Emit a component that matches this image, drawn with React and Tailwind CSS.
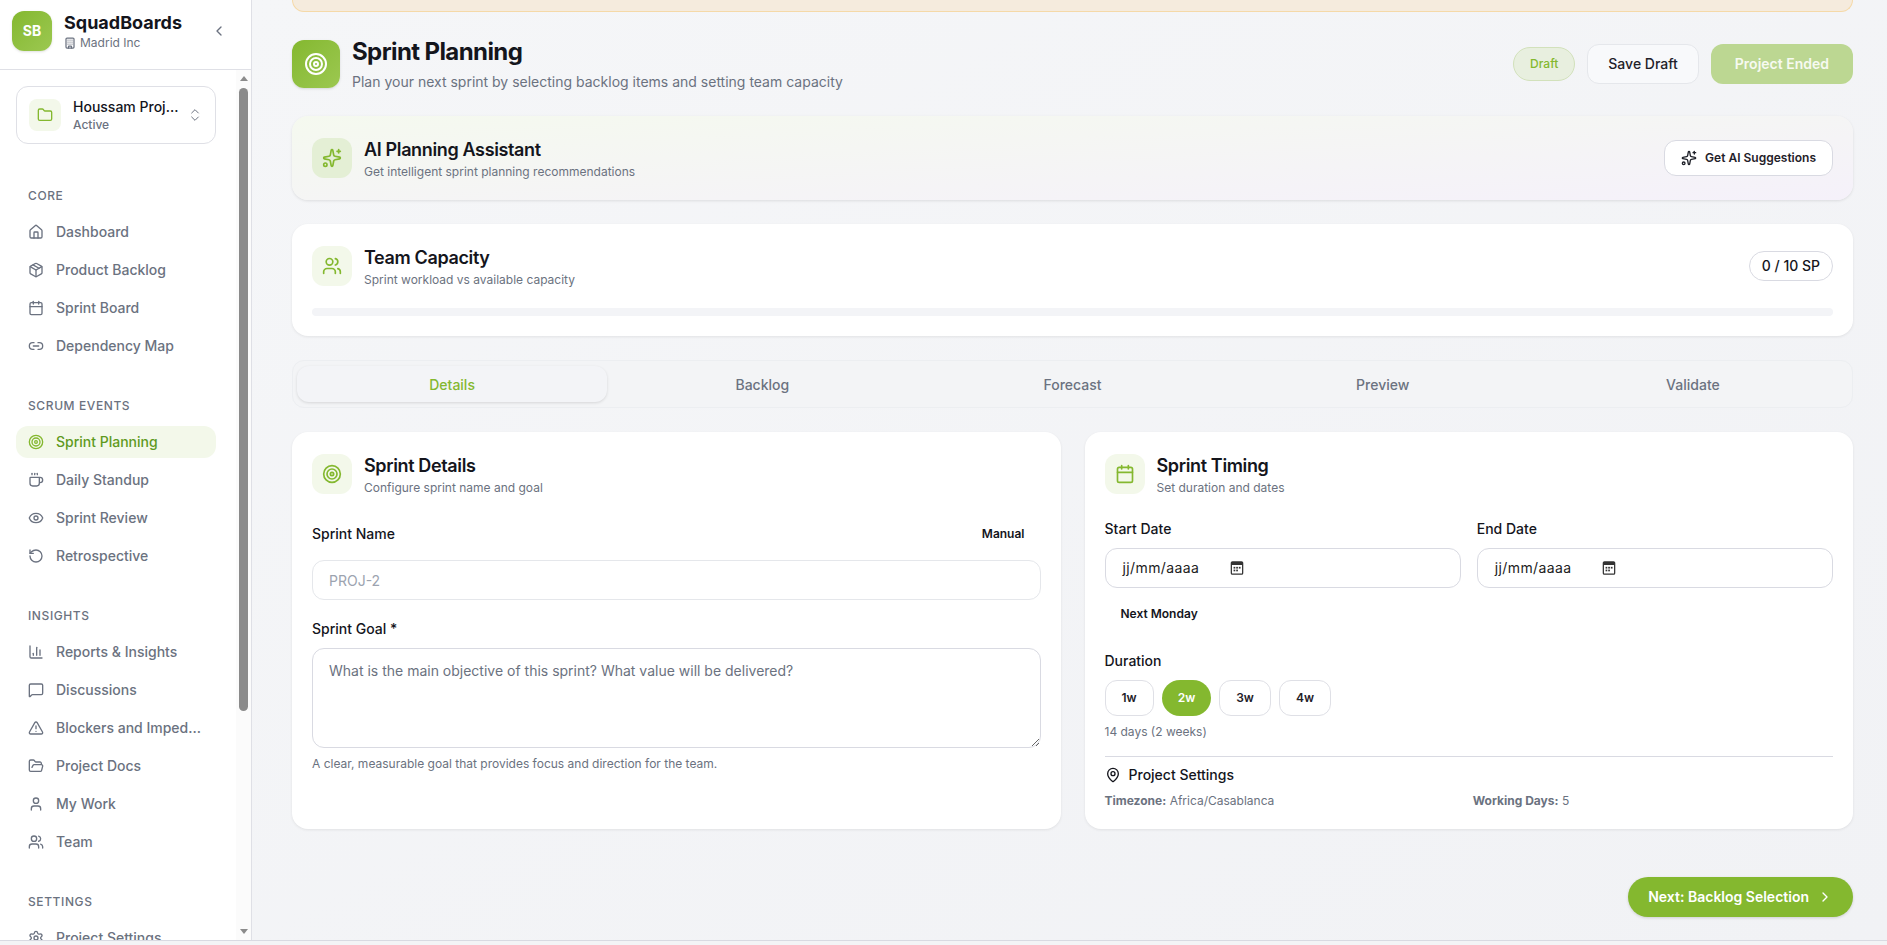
import React from "react";
import {
  ChevronLeft, ChevronRight, ChevronsUpDown, Building, Folder, House, Package, Calendar, Link2, Target, Coffee, Eye,
  RotateCcw, ChartColumn, MessageSquare, TriangleAlert, FolderOpen, User, Users, Settings, Sparkles, MapPin,
} from "lucide-react";

function NavItem({ icon: Icon, label, active }) {
  return (
    <div className={`flex h-8 shrink-0 items-center gap-3 rounded-xl px-3 text-sm font-medium ${active ? "bg-[#f3f8ea] text-[#5f9a1e]" : "text-[#6b7280]"}`}>
      <Icon className={`h-4 w-4 shrink-0 ${active ? "text-[#84b82f]" : ""}`} strokeWidth={2} />
      <span className="truncate">{label}</span>
    </div>
  );
}

function Section({ title, items }) {
  return (
    <div className="mb-9">
      <div className="mb-3 px-3 text-xs font-medium leading-4 tracking-wider text-[#6b7280]">{title}</div>
      <div className="flex flex-col gap-1.5">
        {items.map((i) => (
          <NavItem key={i.label} {...i} />
        ))}
      </div>
    </div>
  );
}

function Sidebar() {
  return (
    <aside className="flex h-full w-[252px] shrink-0 flex-col border-r border-[#dfe0e6] bg-white">
      <div className="flex h-[70px] shrink-0 items-center border-b border-[#dfe0e6] pl-3 pr-6 pb-[8px]">
        <div className="flex h-10 w-10 items-center justify-center rounded-xl bg-gradient-to-br from-[#84b82f] to-[#9cc850] text-sm font-bold text-white shadow-sm">SB</div>
        <div className="ml-3 flex-1">
          <div className="text-lg font-bold leading-6 text-[#14151c]">SquadBoards</div>
          <div className="flex items-center gap-1 text-xs leading-4 text-[#6b7280]">
            <Building className="h-3 w-3" strokeWidth={2.5} />
            Madrid Inc
          </div>
        </div>
        <ChevronLeft className="h-4 w-4 text-[#6b7280]" strokeWidth={2} />
      </div>
      <div className="flex min-h-0 flex-1">
        <div className="min-w-0 flex-1 overflow-hidden pl-4 pr-5 pt-4">
          <div className="mb-11 flex h-[58px] items-center rounded-xl border border-[#dfe0e6] pl-3 pr-[12px]">
            <div className="flex h-8 w-8 shrink-0 items-center justify-center rounded-lg bg-[#f3f8ea]">
              <Folder className="h-4 w-4 text-[#84b82f]" strokeWidth={2} />
            </div>
            <div className="ml-3 min-w-0 flex-1">
              <div className="truncate text-sm font-medium leading-5 text-[#14151c]">Houssam Project</div>
              <div className="text-xs font-medium leading-4 text-[#6b7280]">Active</div>
            </div>
            <ChevronsUpDown className="ml-2 h-4 w-4 shrink-0 text-[#6b7280]" strokeWidth={1.5} />
          </div>
          <Section title="CORE" items={[
            { icon: House, label: "Dashboard" },
            { icon: Package, label: "Product Backlog" },
            { icon: Calendar, label: "Sprint Board" },
            { icon: Link2, label: "Dependency Map" },
          ]} />
          <Section title="SCRUM EVENTS" items={[
            { icon: Target, label: "Sprint Planning", active: true },
            { icon: Coffee, label: "Daily Standup" },
            { icon: Eye, label: "Sprint Review" },
            { icon: RotateCcw, label: "Retrospective" },
          ]} />
          <Section title="INSIGHTS" items={[
            { icon: ChartColumn, label: "Reports & Insights" },
            { icon: MessageSquare, label: "Discussions" },
            { icon: TriangleAlert, label: "Blockers and Impediments" },
            { icon: FolderOpen, label: "Project Docs" },
            { icon: User, label: "My Work" },
            { icon: Users, label: "Team" },
          ]} />
          <Section title="SETTINGS" items={[{ icon: Settings, label: "Project Settings" }]} />
        </div>
        <div className="flex w-[15px] shrink-0 flex-col items-center bg-[#fbfbfb]">
          <div className="mt-[6px] h-0 w-0 border-x-[4px] border-b-[5px] border-x-transparent border-b-[#8b8b8b]" />
          <div className="mt-[7px] h-[623px] w-[9px] rounded-full bg-[#8b8b8b]" />
          <div className="mt-auto mb-[6px] h-0 w-0 border-x-[4px] border-t-[5px] border-x-transparent border-t-[#8b8b8b]" />
        </div>
      </div>
    </aside>
  );
}

function IconBox({ icon: Icon, tint }) {
  return (
    <div className={`flex h-10 w-10 shrink-0 items-center justify-center rounded-xl ${tint ? "bg-[#e4efd5]" : "bg-[#f3f8ea]"}`}>
      <Icon className="h-5 w-5 text-[#84b82f]" strokeWidth={2} />
    </div>
  );
}

function CardHead({ icon, title, sub, tint, children }) {
  return (
    <div className="flex h-11 items-center gap-3">
      <IconBox icon={icon} tint={tint} />
      <div className="flex-1">
        <div className="text-lg font-semibold leading-7 tracking-[-0.02em] text-[#14151c]">{title}</div>
        <div className="text-xs leading-4 text-[#6b7280]">{sub}</div>
      </div>
      {children}
    </div>
  );
}

function PickerGlyph() {
  return (
    <svg viewBox="0 0 12 14" className="h-[16px] w-[14px] text-[#333]" fill="currentColor">
      <path d="M2 1h8a1.5 1.5 0 0 1 1.5 1.5v9A1.5 1.5 0 0 1 10 13H2a1.5 1.5 0 0 1-1.5-1.5v-9A1.5 1.5 0 0 1 2 1zm-.4 3.4v7.1c0 .3.1.4.4.4h8c.3 0 .4-.1.4-.4V4.4H1.6z" />
      <rect x="3" y="6" width="1.5" height="1.5" /><rect x="5.3" y="6" width="1.5" height="1.5" /><rect x="7.6" y="6" width="1.5" height="1.5" />
      <rect x="3" y="8.4" width="1.5" height="1.5" /><rect x="5.3" y="8.4" width="1.5" height="1.5" />
    </svg>
  );
}

function DateField({ label }) {
  return (
    <div>
      <div className="mb-[9px] text-sm font-medium leading-5 text-[#14151c]">{label}</div>
      <div className="flex h-10 items-center rounded-xl border border-[#d9dae2] bg-white pl-[17px] text-sm text-[#222]">
        <span className="w-[107px] tracking-[0.4px]">jj/mm/aaaa</span>
        <PickerGlyph />
      </div>
    </div>
  );
}

function Tab({ label, active }) {
  return (
    <div className={`flex h-9 flex-1 items-center justify-center rounded-xl pt-px text-sm font-medium ${active ? "bg-[#f3f4f7] text-[#84b82f] shadow-[0_1px_3px_rgba(0,0,0,0.12)]" : "text-[#6b7280]"}`}>
      {label}
    </div>
  );
}

function Main() {
  return (
    <main className="min-w-0 flex-1 overflow-hidden bg-gradient-to-br from-[#f5f6f8] to-[#f1f2f5] pl-10 pr-[34px]">
      <div className="mb-6 h-3 rounded-b-xl border-x border-b border-[#f5d9a8] bg-[#f5ebdd]" />

      <div className="mb-6 flex h-14 items-center gap-3">
        <div className="flex h-12 w-12 items-center justify-center rounded-xl bg-gradient-to-br from-[#84b82f] to-[#9cc850] shadow-sm">
          <Target className="h-6 w-6 text-white" strokeWidth={2} />
        </div>
        <div className="flex-1">
          <h1 className="text-2xl font-bold leading-8 tracking-tight text-[#14151c]">Sprint Planning</h1>
          <p className="mt-1 text-sm leading-5 text-[#6b7280]">Plan your next sprint by selecting backlog items and setting team capacity</p>
        </div>
        <div className="flex h-[34px] items-center rounded-full border border-[#d2e1bb] bg-[#e8efdf] px-4 text-xs font-medium text-[#84b82f]">Draft</div>
        <div className="flex h-10 items-center rounded-xl border border-[#e5e7eb] bg-[#f8f9fb] px-5 text-sm font-medium text-[#1f2129]">Save Draft</div>
        <div className="flex h-10 items-center rounded-xl bg-[#bcd792] px-6 text-sm font-semibold text-[#f7faf1]">Project Ended</div>
      </div>

      <div className="mb-6 rounded-2xl bg-gradient-to-br from-[#f5f9ef] to-[#f5f1fa] p-5 shadow-[0_1px_3px_rgba(0,0,0,0.1)]">
        <CardHead icon={Sparkles} tint title="AI Planning Assistant" sub="Get intelligent sprint planning recommendations">
          <div className="flex h-9 items-center gap-2 rounded-xl border border-[#d9dae2] bg-white px-4 text-xs font-semibold text-[#1f2129]">
            <Sparkles className="h-4 w-4" strokeWidth={2} />
            Get AI Suggestions
          </div>
        </CardHead>
      </div>

      <div className="mb-6 rounded-2xl bg-white p-5 shadow-[0_1px_3px_rgba(0,0,0,0.08)]">
        <CardHead icon={Users} title="Team Capacity" sub="Sprint workload vs available capacity">
          <div className="flex h-[30px] items-center rounded-full border border-[#d9dae2] px-3 text-sm font-medium text-[#14151c]">0 / 10 SP</div>
        </CardHead>
        <div className="mt-5 h-2 rounded-full bg-[#f3f4f7]" />
      </div>

      <div className="mb-6 flex h-12 items-center rounded-xl border border-[#eceef1] bg-[#f3f4f6] p-[4px]">
        <Tab label="Details" active />
        <Tab label="Backlog" />
        <Tab label="Forecast" />
        <Tab label="Preview" />
        <Tab label="Validate" />
      </div>

      <div className="grid grid-cols-2 gap-6">
        <section className="rounded-2xl bg-white p-5 shadow-[0_1px_3px_rgba(0,0,0,0.08)]">
          <CardHead icon={Target} title="Sprint Details" sub="Configure sprint name and goal" />
          <div className="mt-6 mb-3 flex h-7 items-center justify-between">
            <span className="text-sm font-medium text-[#14151c]">Sprint Name</span>
            <span className="px-4 text-xs font-semibold text-[#14151c]">Manual</span>
          </div>
          <input readOnly placeholder="PROJ-2" className="block h-10 w-full rounded-xl border border-[#e5e7eb] bg-white px-4 text-sm outline-none placeholder:text-[#9ca3af]" />
          <div className="mt-[19px] mb-[9px] text-sm font-medium leading-5 text-[#14151c]">Sprint Goal *</div>
          <textarea readOnly placeholder="What is the main objective of this sprint? What value will be delivered?" className="block h-[100px] w-full rounded-xl border border-[#d9dae2] bg-white px-4 py-3 text-sm outline-none placeholder:text-[#6b7280]" />
          <p className="mt-2 text-xs leading-4 text-[#6b7280]">A clear, measurable goal that provides focus and direction for the team.</p>
        </section>

        <section className="rounded-2xl bg-white p-5 shadow-[0_1px_3px_rgba(0,0,0,0.08)]">
          <CardHead icon={Calendar} title="Sprint Timing" sub="Set duration and dates" />
          <div className="mt-[23px] grid grid-cols-2 gap-4">
            <DateField label="Start Date" />
            <DateField label="End Date" />
          </div>
          <div className="mt-3 flex h-7 items-center px-4 text-xs font-semibold text-[#14151c]">Next Monday</div>
          <div className="mt-[23px] mb-[9px] text-sm font-medium leading-5 text-[#14151c]">Duration</div>
          <div className="flex gap-2">
            {["1w", "2w", "3w", "4w"].map((d) => (
              <div key={d} className={d === "2w" ? "flex h-9 items-center rounded-full bg-[#84b82f] px-4 text-xs font-semibold text-white" : "flex h-9 items-center rounded-xl border border-[#dfe0e6] bg-white px-4 text-xs font-semibold text-[#1f2129]"}>
                {d}
              </div>
            ))}
          </div>
          <p className="mt-2 text-xs leading-4 text-[#6b7280]">14 days (2 weeks)</p>
          <div className="mt-4 border-t border-[#d9dae2] pt-[8px]">
            <div className="flex items-center gap-2 text-sm font-medium leading-5 text-[#14151c]">
              <MapPin className="h-4 w-4" strokeWidth={2} />
              Project Settings
            </div>
            <div className="mt-2 grid grid-cols-2 gap-2 text-xs leading-4 text-[#6b7280]">
              <div><span className="font-bold">Timezone:</span> Africa/Casablanca</div>
              <div><span className="font-bold">Working Days:</span> 5</div>
            </div>
          </div>
        </section>
      </div>

      <div className="mt-12 flex justify-end">
        <div className="flex h-10 items-center gap-2 rounded-full bg-[#84b82f] px-5 text-sm font-semibold text-white shadow-[0_1px_3px_rgba(0,0,0,0.15)]">
          Next: Backlog Selection
          <ChevronRight className="h-4 w-4" strokeWidth={2} />
        </div>
      </div>
    </main>
  );
}

export default function App() {
  return (
    <div className="flex h-screen flex-col overflow-hidden bg-[#f3f4f6] font-['Inter',sans-serif]">
      <div className="flex h-[941px] shrink-0 overflow-hidden border-b border-[#d9dae2]">
        <Sidebar />
        <Main />
      </div>
    </div>
  );
}
